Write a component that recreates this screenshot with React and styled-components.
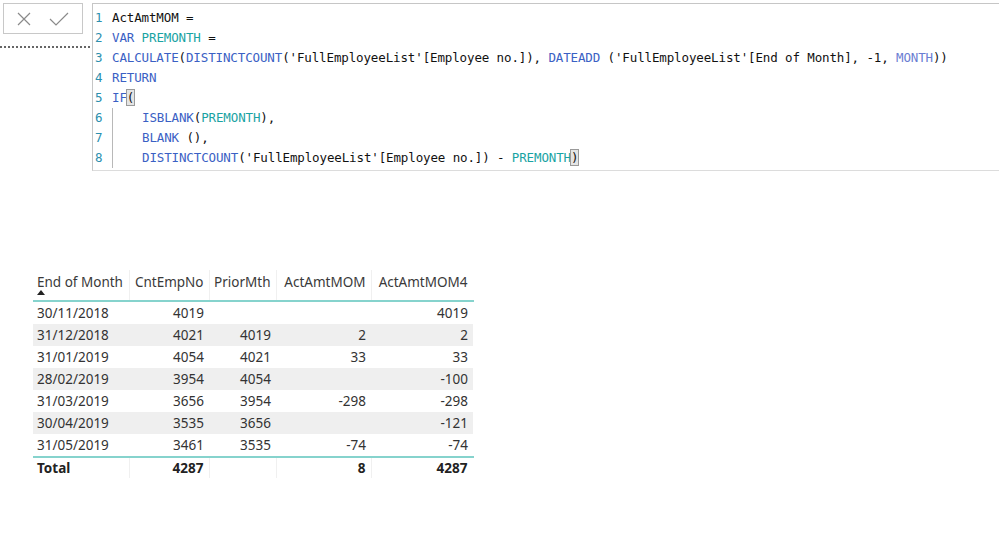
import React from "react";
import styled, { createGlobalStyle } from "styled-components";

const GlobalStyle = createGlobalStyle`
  html, body {
    margin: 0;
    padding: 0;
    background: #ffffff;
  }
`;

const Page = styled.div`
  width: 999px;
  height: 534px;
  overflow: hidden;
  background: #ffffff;
`;

const FormulaBar = styled.div`
  display: flex;
  align-items: flex-start;
  padding-top: 3px;
`;

const LeftPane = styled.div`
  width: 92px;
  flex-shrink: 0;
  display: flex;
  flex-direction: column;
`;

const ButtonBox = styled.div`
  margin-left: 3px;
  width: 78px;
  height: 29px;
  border: 1px solid #c8c8c8;
  display: flex;
  align-items: center;
  justify-content: center;
  gap: 18px;
`;

const IconButton = styled.span`
  display: flex;
  align-items: center;
  justify-content: center;
  width: ${(p) => p.size}px;
  height: ${(p) => p.size}px;
`;

const Dots = styled.div`
  margin-top: 12px;
  width: 90px;
  height: 0;
  border-top: 2px dotted #666;
`;

const Editor = styled.div`
  flex: 1;
  height: 162px;
  border-top: 1px solid #c6c6c6;
  border-left: 1px solid #c6c6c6;
  border-bottom: 1px solid #dcdcdc;
  padding-top: 4px;
  font-family: "DejaVu Sans Mono", "Liberation Mono", monospace;
  font-size: 12.5px;
  letter-spacing: -0.13px;
  color: #111;
`;

const Line = styled.div`
  height: 20px;
  line-height: 20px;
  white-space: pre;
`;

const LineNo = styled.span`
  display: inline-block;
  width: 17px;
  padding-left: 2px;
  color: #2b8fae;
  vertical-align: top;
`;

const Indent = styled.span`
  display: inline-block;
  width: 30px;
  height: 20px;
  vertical-align: top;
  border-left: 1px solid #b8b8b8;
  box-sizing: border-box;
`;

const Kw = styled.span`
  color: ${(p) => (p.light ? "#6a7dd2" : "#3a60c4")};
`;

const Var = styled.span`
  color: #19a3a3;
`;

const Match = styled.span`
  outline: 1px solid #9a9a9a;
  background: #e4e4e4;
`;

const TableWrap = styled.div`
  margin-top: 99px;
  margin-left: 33px;
`;

const Table = styled.table`
  border-collapse: collapse;
  font-family: "Noto Sans", "Open Sans", sans-serif;
  font-size: 13.5px;
  color: #333;
`;

const Th = styled.th`
  width: ${(p) => p.w}px;
  height: 31px;
  box-sizing: border-box;
  padding: 0 5px 0 4px;
  font-weight: normal;
  white-space: nowrap;
  text-align: ${(p) => (p.left ? "left" : "right")};
  vertical-align: top;
  border-bottom: 2px solid #86d3cd;
  border-right: 1px solid ${(p) => (p.last ? "transparent" : "#f0f0f0")};
  color: #3a3a3a;
  line-height: 24px;
  position: relative;
`;

const SortArrow = styled.span`
  position: absolute;
  left: 4px;
  top: 20px;
  width: 0;
  height: 0;
  border-left: 4px solid transparent;
  border-right: 4px solid transparent;
  border-bottom: 5px solid #222;
`;

const Tr = styled.tr`
  background: ${(p) => (p.shade ? "#efefef" : "#ffffff")};
`;

const Td = styled.td`
  height: 22px;
  padding: 0 5px 0 4px;
  white-space: nowrap;
  text-align: ${(p) => (p.left ? "left" : "right")};
  line-height: 22px;
`;

const TotalTd = styled.td`
  height: 20px;
  padding: 0 5px 0 4px;
  text-align: ${(p) => (p.left ? "left" : "right")};
  font-weight: bold;
  color: #222;
  border-top: 2px solid #86d3cd;
  border-right: 1px solid ${(p) => (p.last ? "transparent" : "#f0f0f0")};
  line-height: 18px;
`;

const columns = [
  { name: "End of Month", w: 96, left: true },
  { name: "CntEmpNo", w: 80 },
  { name: "PriorMth", w: 67 },
  { name: "ActAmtMOM", w: 95 },
  { name: "ActAmtMOM4", w: 102 },
];

const rows = [
  ["30/11/2018", "4019", "", "", "4019"],
  ["31/12/2018", "4021", "4019", "2", "2"],
  ["31/01/2019", "4054", "4021", "33", "33"],
  ["28/02/2019", "3954", "4054", "", "-100"],
  ["31/03/2019", "3656", "3954", "-298", "-298"],
  ["30/04/2019", "3535", "3656", "", "-121"],
  ["31/05/2019", "3461", "3535", "-74", "-74"],
];

const totals = ["Total", "4287", "", "8", "4287"];

const App = () => {
  return (
    <Page>
      <GlobalStyle />
      <FormulaBar>
        <LeftPane>
          <ButtonBox>
            <IconButton size={14}>
              <svg width="14" height="14" viewBox="0 0 14 14">
                <path d="M1 1 L13 13 M13 1 L1 13" stroke="#8a8a8a" strokeWidth="1.2" fill="none" />
              </svg>
            </IconButton>
            <IconButton size={20}>
              <svg width="20" height="14" viewBox="0 0 20 14">
                <path d="M1 7 L7 13 L19 1" stroke="#8a8a8a" strokeWidth="1.2" fill="none" />
              </svg>
            </IconButton>
          </ButtonBox>
          <Dots />
        </LeftPane>
        <Editor>
          <Line>
            <LineNo>1</LineNo>ActAmtMOM =
          </Line>
          <Line>
            <LineNo>2</LineNo>
            <Kw>VAR</Kw>{" "}<Var>PREMONTH</Var> =
          </Line>
          <Line>
            <LineNo>3</LineNo>
            <Kw>CALCULATE</Kw>(<Kw>DISTINCTCOUNT</Kw>('FullEmployeeList'[Employee no.]), <Kw>DATEADD</Kw> ('FullEmployeeList'[End of Month], -1, <Kw light>MONTH</Kw>))
          </Line>
          <Line>
            <LineNo>4</LineNo>
            <Kw>RETURN</Kw>
          </Line>
          <Line>
            <LineNo>5</LineNo>
            <Kw>IF</Kw>
            <Match>(</Match>
          </Line>
          <Line>
            <LineNo>6</LineNo>
            <Indent />
            <Kw>ISBLANK</Kw>(<Var>PREMONTH</Var>),
          </Line>
          <Line>
            <LineNo>7</LineNo>
            <Indent />
            <Kw>BLANK</Kw> (),
          </Line>
          <Line>
            <LineNo>8</LineNo>
            <Indent />
            <Kw>DISTINCTCOUNT</Kw>('FullEmployeeList'[Employee no.]) - <Var>PREMONTH</Var>
            <Match>)</Match>
          </Line>
        </Editor>
      </FormulaBar>
      <TableWrap>
        <Table>
          <thead>
            <tr>
              {columns.map((c, i) => (
                <Th key={c.name} w={c.w} left={c.left} last={i === columns.length - 1}>
                  {c.name}
                  {i === 0 && <SortArrow />}
                </Th>
              ))}
            </tr>
          </thead>
          <tbody>
            {rows.map((r, ri) => (
              <Tr key={ri} shade={ri % 2 === 1}>
                {r.map((cell, ci) => (
                  <Td key={ci} left={ci === 0}>
                    {cell}
                  </Td>
                ))}
              </Tr>
            ))}
            <tr>
              {totals.map((cell, ci) => (
                <TotalTd key={ci} left={ci === 0} last={ci === totals.length - 1}>
                  {cell}
                </TotalTd>
              ))}
            </tr>
          </tbody>
        </Table>
      </TableWrap>
    </Page>
  );
};

export default App;
